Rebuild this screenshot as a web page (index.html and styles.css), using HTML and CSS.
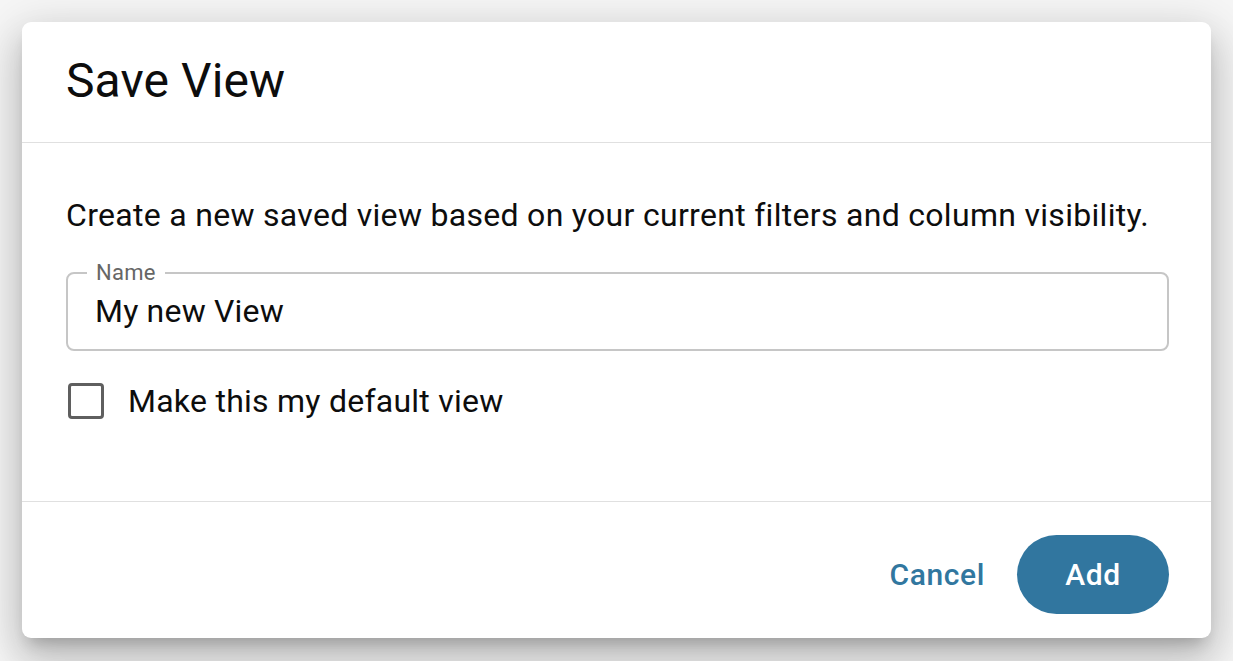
FILE: index.html
```html
<!DOCTYPE html>
<html lang="en">
<head>
<meta charset="utf-8">
<title>Save View</title>
<link rel="stylesheet" href="styles.css">
</head>
<body>
<div class="dialog">
  <div class="dialog-header">
    <h2 class="dialog-title">Save View</h2>
  </div>
  <div class="dialog-content">
    <p class="dialog-text">Create a new saved view based on your current filters and column visibility.</p>
    <fieldset class="field">
      <legend class="field-label">Name</legend>
      <div class="field-value">My new View</div>
    </fieldset>
    <label class="check-row">
      <span class="checkbox"></span>
      <span class="check-label">Make this my default view</span>
    </label>
  </div>
  <div class="dialog-actions">
    <button class="btn btn-text">Cancel</button>
    <button class="btn btn-primary">Add</button>
  </div>
</div>
</body>
</html>
```

FILE: styles.css
```css
* { box-sizing: border-box; }
html, body { margin: 0; padding: 0; }
body {
  background: #f6f6f6;
  font-family: Roboto, "Liberation Sans", Arial, sans-serif;
  color: #0d0d0d;
  padding: 22px;
  width: 1233px;
  height: 661px;
  overflow: hidden;
}
.dialog {
  width: 1189px;
  height: 616px;
  background: #fff;
  border-radius: 9px;
  box-shadow: 0 11px 15px -7px rgba(0,0,0,0.2), 0 24px 38px 3px rgba(0,0,0,0.14), 0 9px 46px 8px rgba(0,0,0,0.12);
  display: flex;
  flex-direction: column;
}
.dialog-header {
  height: 121px;
  border-bottom: 1px solid #e0e0e0;
  display: flex;
  align-items: center;
  padding: 0 44px;
}
.dialog-title {
  margin: 0;
  font-size: 48px;
  font-weight: 400;
  line-height: 1;
  padding-bottom: 2px;
  letter-spacing: 0.1px;
}
.dialog-content {
  flex: 1;
  padding: 48px 42px 0 44px;
  border-bottom: 1px solid #e0e0e0;
}
.dialog-text {
  margin: 0;
  font-size: 32px;
  line-height: 48px;
  letter-spacing: 0.3px;
}
.field {
  margin: 22px 0 0;
  border: 2px solid #c6c6c6;
  border-radius: 8px;
  padding: 0 27px;
  height: 90px;
}
.field-label {
  font-size: 22px;
  color: #666;
  padding: 0 9px;
  margin-left: -8px;
  line-height: 24px;
  letter-spacing: 0.3px;
}
.field-value {
  font-size: 32px;
  line-height: 40px;
  padding-top: 6px;
  letter-spacing: 0.2px;
}
.check-row {
  display: flex;
  align-items: center;
  margin-top: 30px;
  gap: 24px;
}
.checkbox {
  width: 36px;
  height: 36px;
  border: 3px solid #5f5f5f;
  border-radius: 4px;
  margin-left: 2px;
}
.check-label {
  font-size: 32px;
  line-height: 40px;
  letter-spacing: 0.25px;
}
.dialog-actions {
  display: flex;
  justify-content: flex-end;
  align-items: center;
  padding: 33px 42px 24px 0;
}
.btn {
  font-family: Roboto, "Liberation Sans", Arial, sans-serif;
  font-size: 30px;
  font-weight: 500;
  border: none;
  cursor: pointer;
  height: 79px;
  border-radius: 40px;
  letter-spacing: 0.6px;
}
.btn-text {
  background: transparent;
  color: #31779f;
  padding: 0 32px 0 16px;
}
.btn-primary {
  background: #31769f;
  color: #fff;
  width: 152px;
}
```
